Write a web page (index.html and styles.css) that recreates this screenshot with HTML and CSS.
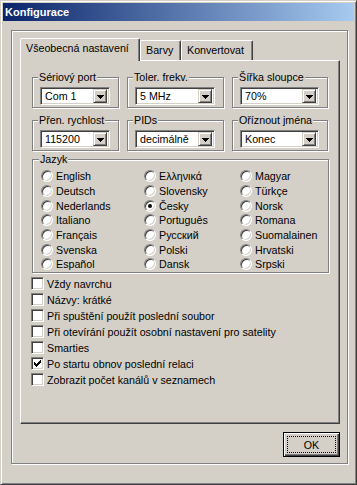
FILE: index.html
```html
<!DOCTYPE html>
<html lang="cs">

<head>
	<meta charset="UTF-8">
	<meta name="viewport" content="width=device-width, initial-scale=1.0">
	<title>Konfigurace</title>
	<link rel="stylesheet" href="styles.css">
</head>

<body>
	<div class="window">
		<div class="titlebar">Konfigurace</div>
		<div class="frame">
			<div class="tabs">
				<div class="tab active">Všeobecná nastavení</div>
				<div class="tab">Barvy</div>
				<div class="tab">Konvertovat</div>
			</div>
			<div class="panel">
				<div class="groups">
					<fieldset class="group">
						<legend>Sériový port</legend>
						<div class="combo"><span class="combo-value">Com 1</span><span class="combo-btn"><svg width="7" height="4" viewBox="0 0 7 4"><path d="M0 0h7v1H6v1H5v1H4v1H3V3H2V2H1V1H0z" /></svg></span></div>
					</fieldset>
					<fieldset class="group">
						<legend>Toler. frekv.</legend>
						<div class="combo"><span class="combo-value">5 MHz</span><span class="combo-btn"><svg width="7" height="4" viewBox="0 0 7 4"><path d="M0 0h7v1H6v1H5v1H4v1H3V3H2V2H1V1H0z" /></svg></span></div>
					</fieldset>
					<fieldset class="group">
						<legend>Šířka sloupce</legend>
						<div class="combo"><span class="combo-value">70%</span><span class="combo-btn"><svg width="7" height="4" viewBox="0 0 7 4"><path d="M0 0h7v1H6v1H5v1H4v1H3V3H2V2H1V1H0z" /></svg></span></div>
					</fieldset>
					<fieldset class="group">
						<legend>Přen. rychlost</legend>
						<div class="combo"><span class="combo-value">115200</span><span class="combo-btn"><svg width="7" height="4" viewBox="0 0 7 4"><path d="M0 0h7v1H6v1H5v1H4v1H3V3H2V2H1V1H0z" /></svg></span></div>
					</fieldset>
					<fieldset class="group">
						<legend>PIDs</legend>
						<div class="combo"><span class="combo-value">decimálně</span><span class="combo-btn"><svg width="7" height="4" viewBox="0 0 7 4"><path d="M0 0h7v1H6v1H5v1H4v1H3V3H2V2H1V1H0z" /></svg></span></div>
					</fieldset>
					<fieldset class="group">
						<legend>Oříznout jména</legend>
						<div class="combo"><span class="combo-value">Konec</span><span class="combo-btn"><svg width="7" height="4" viewBox="0 0 7 4"><path d="M0 0h7v1H6v1H5v1H4v1H3V3H2V2H1V1H0z" /></svg></span></div>
					</fieldset>
				</div>

				<fieldset class="group lang">
					<legend>Jazyk</legend>
					<div class="radios">
						<div class="radio"><span class="dot"></span>English</div>
						<div class="radio"><span class="dot"></span>Deutsch</div>
						<div class="radio"><span class="dot"></span>Nederlands</div>
						<div class="radio"><span class="dot"></span>Italiano</div>
						<div class="radio"><span class="dot"></span>Français</div>
						<div class="radio"><span class="dot"></span>Svenska</div>
						<div class="radio"><span class="dot"></span>Español</div>
						<div class="radio"><span class="dot"></span>Ελληνικά</div>
						<div class="radio"><span class="dot"></span>Slovensky</div>
						<div class="radio"><span class="dot checked"></span>Česky</div>
						<div class="radio"><span class="dot"></span>Português</div>
						<div class="radio"><span class="dot"></span>Русский</div>
						<div class="radio"><span class="dot"></span>Polski</div>
						<div class="radio"><span class="dot"></span>Dansk</div>
						<div class="radio"><span class="dot"></span>Magyar</div>
						<div class="radio"><span class="dot"></span>Türkçe</div>
						<div class="radio"><span class="dot"></span>Norsk</div>
						<div class="radio"><span class="dot"></span>Romana</div>
						<div class="radio"><span class="dot"></span>Suomalainen</div>
						<div class="radio"><span class="dot"></span>Hrvatski</div>
						<div class="radio"><span class="dot"></span>Srpski</div>
					</div>
				</fieldset>

				<div class="checks">
					<div class="check"><span class="box"></span>Vždy navrchu</div>
					<div class="check"><span class="box"></span>Názvy: krátké</div>
					<div class="check"><span class="box"></span>Při spuštění použít poslední soubor</div>
					<div class="check"><span class="box"></span>Při otevírání použít osobní nastavení pro satelity</div>
					<div class="check"><span class="box"></span>Smarties</div>
					<div class="check"><span class="box"><svg width="7" height="7" viewBox="0 0 7 7"><path d="M0 2h1v3H0z M1 3h1v3H1z M2 4h1v3H2z M3 3h1v3H3z M4 2h1v3H4z M5 1h1v3H5z M6 0h1v3H6z" /></svg></span>Po startu obnov poslední relaci</div>
					<div class="check"><span class="box"></span>Zobrazit počet kanálů v seznamech</div>
				</div>
			</div>
			<div class="buttons">
				<button class="btn" type="button"><span class="focus">OK</span></button>
			</div>
		</div>
	</div>
</body>

</html>
```

FILE: styles.css
```css
body {
	margin: 0;
	background-color: #d4d0c8;
	font-family: "Liberation Sans", Arial, sans-serif;
	font-size: 10.7px;
	color: #000;
}

.window {
	box-sizing: border-box;
	width: 357px;
	height: 485px;
	padding: 2px;
	border: 1px solid;
	border-color: #d4d0c8 #404040 #404040 #d4d0c8;
	box-shadow: inset 1px 1px 0 #fff, inset -1px -1px 0 #808080;
}

.titlebar {
	height: 18px;
	line-height: 18px;
	padding-left: 2px;
	background: linear-gradient(to right, #0a246a, #a6caf0);
	color: #fff;
	font-size: 11px;
	font-weight: bold;
}

.frame {
	box-sizing: border-box;
	width: 337px;
	height: 434px;
	margin: 9px 0 0 8px;
	padding: 7px 7px 0 8px;
	border: 1px solid #808080;
	box-shadow: 1px 1px 0 #fff, inset 1px 1px 0 #fff;
}

/* tabs */
.tabs {
	display: flex;
	align-items: flex-end;
	height: 22px;
}

.tab {
	box-sizing: border-box;
	height: 20px;
	padding: 3px 5px 0 5px;
	border: 1px solid;
	border-bottom: none;
	border-color: #fff #404040 #fff #fff;
	border-radius: 2px 2px 0 0;
	box-shadow: inset -1px 0 0 #808080;
	white-space: nowrap;
}

.tab.active {
	position: relative;
	z-index: 1;
	height: 23px;
	margin-bottom: -1px;
	padding: 3px 6px 0 5px;
	background-color: #d4d0c8;
	width: 120px;
}

.tab:nth-child(2) {
	width: 41px;
}

.tab:nth-child(3) {
	width: 72px;
}

.panel {
	box-sizing: border-box;
	height: 364px;
	padding: 10px 10px 0 11px;
	border: 1px solid;
	border-color: #fff #404040 #404040 #fff;
	box-shadow: inset -1px -1px 0 #808080;
}

/* group boxes */
.groups {
	display: grid;
	grid-template-columns: 87px 97px 96px;
	column-gap: 8px;
	row-gap: 6px;
}

.group {
	margin: 0;
	padding: 3px 8px 2px 7px;
	min-width: 0;
	border: 1px solid #808080;
	box-shadow: 1px 1px 0 #fff, inset 1px 1px 0 #fff;
}

.group legend {
	padding: 0 1px;
	margin-left: -2px;
	background-color: #d4d0c8;
	line-height: 13px;
}

.combo {
	box-sizing: border-box;
	display: flex;
	align-items: center;
	height: 18px;
	border: 1px solid;
	border-color: #808080 #fff #fff #808080;
	box-shadow: inset 1px 1px 0 #404040, inset -1px -1px 0 #d4d0c8;
	background-color: #fff;
	padding: 2px;
}

.combo-value {
	flex: 1;
	padding-left: 2px;
	white-space: nowrap;
	overflow: hidden;
}

.combo-btn {
	box-sizing: border-box;
	display: flex;
	align-items: center;
	justify-content: center;
	width: 14px;
	height: 14px;
	background-color: #d4d0c8;
	border: 1px solid;
	border-color: #d4d0c8 #404040 #404040 #d4d0c8;
	box-shadow: inset 1px 1px 0 #fff, inset -1px -1px 0 #808080;
}

.combo-btn svg {
	display: block;
	margin-top: 1px;
}

/* language radios */
.lang {
	margin-top: 2px;
	padding: 3px 0 0 8px;
}

.radios {
	display: grid;
	grid-auto-flow: column;
	grid-template-rows: repeat(7, 14.7px);
	grid-template-columns: 103px 96px auto;
}

.radio {
	display: flex;
	align-items: center;
	white-space: nowrap;
}

.dot {
	position: relative;
	box-sizing: border-box;
	width: 12px;
	height: 12px;
	margin-right: 3px;
	border-radius: 50%;
	border: 1px solid;
	border-color: #808080 #fff #fff #808080;
	box-shadow: inset 1px 1px 0 #404040, inset -1px -1px 0 #d4d0c8;
	background-color: #fff;
}

.dot.checked::after {
	content: "";
	position: absolute;
	left: 3px;
	top: 3px;
	width: 4px;
	height: 4px;
	border-radius: 50%;
	background-color: #000;
}

/* check boxes */
.checks {
	margin: 3px 0 0 -1px;
}

.check {
	display: flex;
	align-items: center;
	height: 16px;
	white-space: nowrap;
}

.box {
	box-sizing: border-box;
	display: flex;
	align-items: center;
	justify-content: center;
	width: 13px;
	height: 13px;
	margin-right: 3px;
	border: 1px solid;
	border-color: #808080 #fff #fff #808080;
	box-shadow: inset 1px 1px 0 #404040, inset -1px -1px 0 #d4d0c8;
	background-color: #fff;
}

/* buttons */
.buttons {
	display: flex;
	justify-content: flex-end;
	margin-top: 8px;
}

.btn {
	box-sizing: border-box;
	width: 57px;
	height: 25px;
	padding: 3px;
	border: 1px solid #000;
	background-color: #d4d0c8;
	box-shadow: inset 1px 1px 0 #fff, inset -1px -1px 0 #404040, inset -2px -2px 0 #808080;
	font: inherit;
	color: #000;
}

.focus {
	display: flex;
	align-items: center;
	justify-content: center;
	height: 100%;
	border: 1px dotted #000;
	box-sizing: border-box;
}
```
